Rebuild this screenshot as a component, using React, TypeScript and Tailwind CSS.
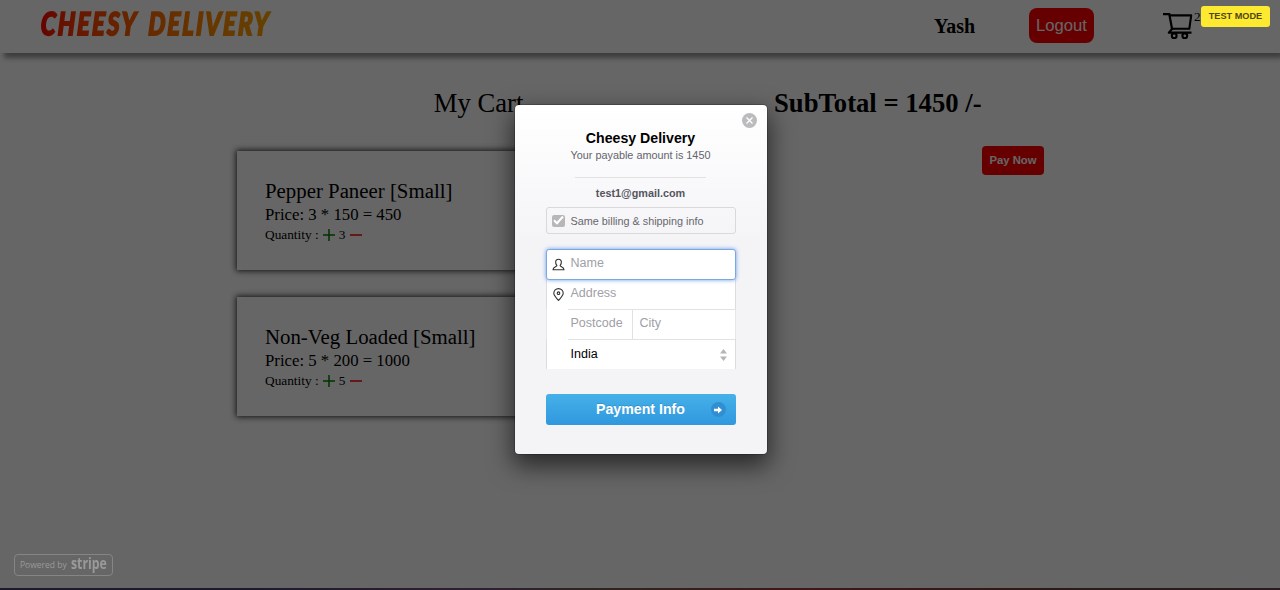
import React from "react";

const serif = "font-['Liberation_Serif',serif]";
const sans = "font-['Liberation_Sans',sans-serif]";

type Item = { name: string; price: string; quantity: number };

const items: Item[] = [
  { name: "Pepper Paneer [Small]", price: "3 * 150 = 450", quantity: 3 },
  { name: "Non-Veg Loaded [Small]", price: "5 * 200 = 1000", quantity: 5 },
];

function CartIcon() {
  return (
    <svg className="h-[28px] w-[32px] shrink-0" viewBox="0 0 32 28" fill="none" stroke="#000">
      <path d="M0 3.2H6.3L9.2 18.8" strokeWidth="2.2" />
      <path d="M6.3 4.4H28.2L26.3 17.8H9.2L5.8 21.6H28.5" strokeWidth="2.1" strokeLinejoin="round" />
      <circle cx="11.2" cy="24.8" r="2.4" strokeWidth="2.1" />
      <circle cx="21.8" cy="24.8" r="2.4" strokeWidth="2.1" />
    </svg>
  );
}

function Header() {
  return (
    <header className="flex h-[53px] items-start bg-white pl-[41px] shadow-[4px_5px_5px_0_#999]">
      <div className="mt-[7px] w-[240px]">
        <h1 className="inline-block origin-left -skew-x-3 scale-x-[0.76] whitespace-nowrap bg-gradient-to-r from-[#ff0000] to-[#ffa500] bg-clip-text pr-1 font-['Lato',sans-serif] text-[31.5px] leading-[32px] font-black tracking-[2.8px] text-transparent italic [-webkit-text-stroke:1.8px_transparent] [word-spacing:5px]">
          CHEESY DELIVERY
        </h1>
      </div>
      <div className="mt-[15px] ml-[653px] w-[95px] text-[20px] leading-[22px] font-bold">Yash</div>
      <button className={`mt-[8px] h-[35px] w-[65px] shrink-0 rounded-[8px] bg-[#ff0000] text-[16.67px] text-white ${sans}`}>
        Logout
      </button>
      <div className="mt-[11px] ml-[69px] flex items-start">
        <CartIcon />
        <span className="-ml-px -mt-px text-[13.3px] leading-[13px]">2</span>
      </div>
    </header>
  );
}

function CartItem({ item }: { item: Item }) {
  return (
    <article className="h-[119px] w-[493px] bg-white pt-[29px] pl-[28px] shadow-[0_0_6px_1px_#333]">
      <h3 className="text-[20.83px] leading-[23px]">{item.name}</h3>
      <p className="text-[16.75px] leading-[23px]">Price: {item.price}</p>
      <p className="-mt-px flex items-center text-[13.33px] leading-[20px]">
        Quantity :
        <svg className="ml-[4px] h-[13px] w-[12px]" viewBox="0 0 12 13" stroke="green" strokeWidth="1.5">
          <path d="M0 6H12M6 0V12" />
        </svg>
        <span className="mx-[4px]">{item.quantity}</span>
        <svg className="ml-px h-[13px] w-[12px]" viewBox="0 0 12 13" stroke="red" strokeWidth="1.5">
          <path d="M0 6H12" />
        </svg>
      </p>
    </article>
  );
}

function CartPage() {
  return (
    <div className={`flex h-[590px] w-[1280px] flex-col bg-white text-black ${serif}`}>
      <Header />
      <div className="flex grow pl-[237px]">
        <section className="w-[493px]">
          <h2 className="mt-[35px] pr-[10px] text-center text-[26.67px] leading-[30px]">My Cart</h2>
          <div className="mt-[33px] flex flex-col gap-[27px]">
            {items.map((item) => (
              <CartItem key={item.name} item={item} />
            ))}
          </div>
        </section>
        <aside className="ml-[44px] flex w-[270px] flex-col">
          <h2 className="mt-[35px] text-[26.67px] leading-[30px] font-bold whitespace-nowrap">SubTotal = 1450 /-</h2>
          <button className={`mt-[28px] h-[29px] w-[62px] self-end rounded-[4px] bg-[#ff0000] text-[11.3px] font-bold text-white ${sans}`}>
            Pay Now
          </button>
        </aside>
      </div>
      <footer className="h-[2px] bg-linear-[to_right,#4b4373_0%,#4b4373_20%,#784f83_38%,#785c4d_47%,#a03c3c_62%,#6c4141_85%,#6c4150_100%]" />
    </div>
  );
}

function PersonIcon() {
  return (
    <svg className="h-[13px] w-[13px]" viewBox="0 0 13 13" fill="none" stroke="#333" strokeWidth="1.1">
      <path d="M4.9 7.6C3 5.2 3 1.2 6.5 1.2S10 5.2 8.1 7.6C8.4 9 12 8.6 12 11.8H1C1 8.6 4.6 9 4.9 7.6Z" />
    </svg>
  );
}

function PinIcon() {
  return (
    <svg className="h-[13px] w-[13px]" viewBox="0 0 13 13" fill="none" stroke="#333" strokeWidth="1.1">
      <path d="M6.5 12.4C4.2 9.7 1.8 7.7 1.8 5.3a4.7 4.7 0 0 1 9.4 0C11.2 7.7 8.8 9.7 6.5 12.4Z" />
      <circle cx="6.5" cy="5.2" r="1.3" />
    </svg>
  );
}

function CheckoutDialog() {
  return (
    <div className={`relative flex h-[349px] w-[252px] flex-col rounded-[4px] bg-[#f5f5f7] bg-gradient-to-b from-white to-[#f4f4f7] to-40% px-[31px] shadow-[0_10px_25px_2px_rgba(0,0,0,0.6),0_0_0_1px_rgba(0,0,0,0.2)] ${sans}`}>
      <button className="absolute top-[8px] right-[10px] flex h-[15px] w-[15px] items-center justify-center rounded-full bg-[#bcbcbe]">
        <svg className="h-[7px] w-[7px]" viewBox="0 0 7 7" stroke="#fff" strokeWidth="1.3">
          <path d="M.5 .5L6.5 6.5M6.5 .5L.5 6.5" />
        </svg>
      </button>
      <h2 className="mt-[25px] text-center text-[14.17px] leading-[16px] font-bold text-black">Cheesy Delivery</h2>
      <p className="mt-[3px] text-center text-[10.83px] leading-[13px] text-[#62646b]">Your payable amount is 1450</p>
      <hr className="mx-auto mt-[15px] w-[131px] border-[#e3e3e6]" />
      <p className="mt-[9px] text-center text-[10.83px] leading-[13px] font-bold text-[#555560]">test1@gmail.com</p>
      <label className="mt-[7px] flex h-[27px] shrink-0 items-center rounded-[3px] border border-[#d9d9dc] pl-[5px] text-[10.83px] text-[#66666e]">
        <span className="mr-[6px] flex h-[12px] w-[13px] items-center justify-center rounded-[2px] bg-[#b7b7b9]">
          <svg className="h-[11px] w-[12px]" viewBox="0 0 12 11" fill="none" stroke="#fff" strokeWidth="2">
            <path d="M2 5.2L5 8.2L11 1.5" />
          </svg>
        </span>
        <span className="pt-px">Same billing &amp; shipping info</span>
      </label>
      <div className="mt-[15px] flex shrink-0 flex-col text-[12.5px] text-[#a0a0a7]">
        <div className="z-10 flex h-[31px] items-center rounded-[3px] border border-[#7aa8e4] bg-white pl-[5px] shadow-[0_0_4px_#6c9fe6]">
          <PersonIcon />
          <span className="-mt-[3px] ml-[6px]">Name</span>
        </div>
        <div className="-mt-px flex h-[30px] items-center border-x border-[#dcdcdf] bg-white pl-[5px]">
          <PinIcon />
          <span className="-mt-[2px] ml-[6px]">Address</span>
        </div>
        <div className="flex h-[30px] border-x border-[#e6e6e9] bg-white pl-[21px]">
          <div className="flex w-[65px] items-center border-t border-r border-[#e2e2e5] pb-[3px] pl-[3px]">Postcode</div>
          <div className="flex grow items-center border-t border-[#e2e2e5] pb-[3px] pl-[7px]">City</div>
        </div>
        <div className="flex h-[30px] border-x border-[#dcdcdf] bg-white pl-[21px]">
          <div className="flex grow items-center justify-between border-t border-[#e2e2e5] pr-[8px] pl-[3px] text-black">
            India
            <svg className="h-[12px] w-[7px]" viewBox="0 0 7 12" fill="#b5b5b8">
              <path d="M3.5 0L7 4.4H0ZM0 7.6H7L3.5 12Z" />
            </svg>
          </div>
        </div>
      </div>
      <button className="mt-[25px] grid h-[31px] shrink-0 grid-cols-[25px_1fr_25px] items-center rounded-[3px] bg-gradient-to-b from-[#45b1e8] to-[#3097de] text-[14.17px] font-bold text-white [text-shadow:0_-1px_0_rgba(0,0,0,0.15)]">
        <span />
        <span>Payment Info</span>
        <span className="flex h-[15px] w-[15px] items-center justify-center rounded-full bg-[#2f8fd2]">
          <svg className="h-[8px] w-[8px]" viewBox="0 0 8 8" fill="#fff">
            <path d="M0 2.7H4V.4L8 4L4 7.6V5.3H0Z" />
          </svg>
        </span>
      </button>
    </div>
  );
}

export default function App() {
  return (
    <div className="relative h-[590px] w-[1280px] overflow-hidden">
      <CartPage />
      <div className="absolute inset-0 flex items-start bg-black/60 pt-[105px] pl-[514.5px]">
        <CheckoutDialog />
        <div className={`absolute top-[6px] right-[10px] flex h-[21px] w-[69px] items-center justify-center rounded-[3px] bg-[#fde92f] text-[9.17px] font-bold whitespace-nowrap text-[#4f4614] ${sans}`}>
          TEST MODE
        </div>
        <div className="absolute bottom-[14px] left-[14px] flex h-[22px] w-[99px] items-center rounded-[4px] border border-[#858585] pl-[5px] font-['Open_Sans',sans-serif] text-[#9a9a9a]">
          <span className="w-[51px] shrink-0 text-[8.5px] whitespace-nowrap">Powered by</span>
          <span className="-mt-[2px] origin-left scale-x-[0.79] text-[15.5px] leading-none font-bold">stripe</span>
        </div>
      </div>
    </div>
  );
}
